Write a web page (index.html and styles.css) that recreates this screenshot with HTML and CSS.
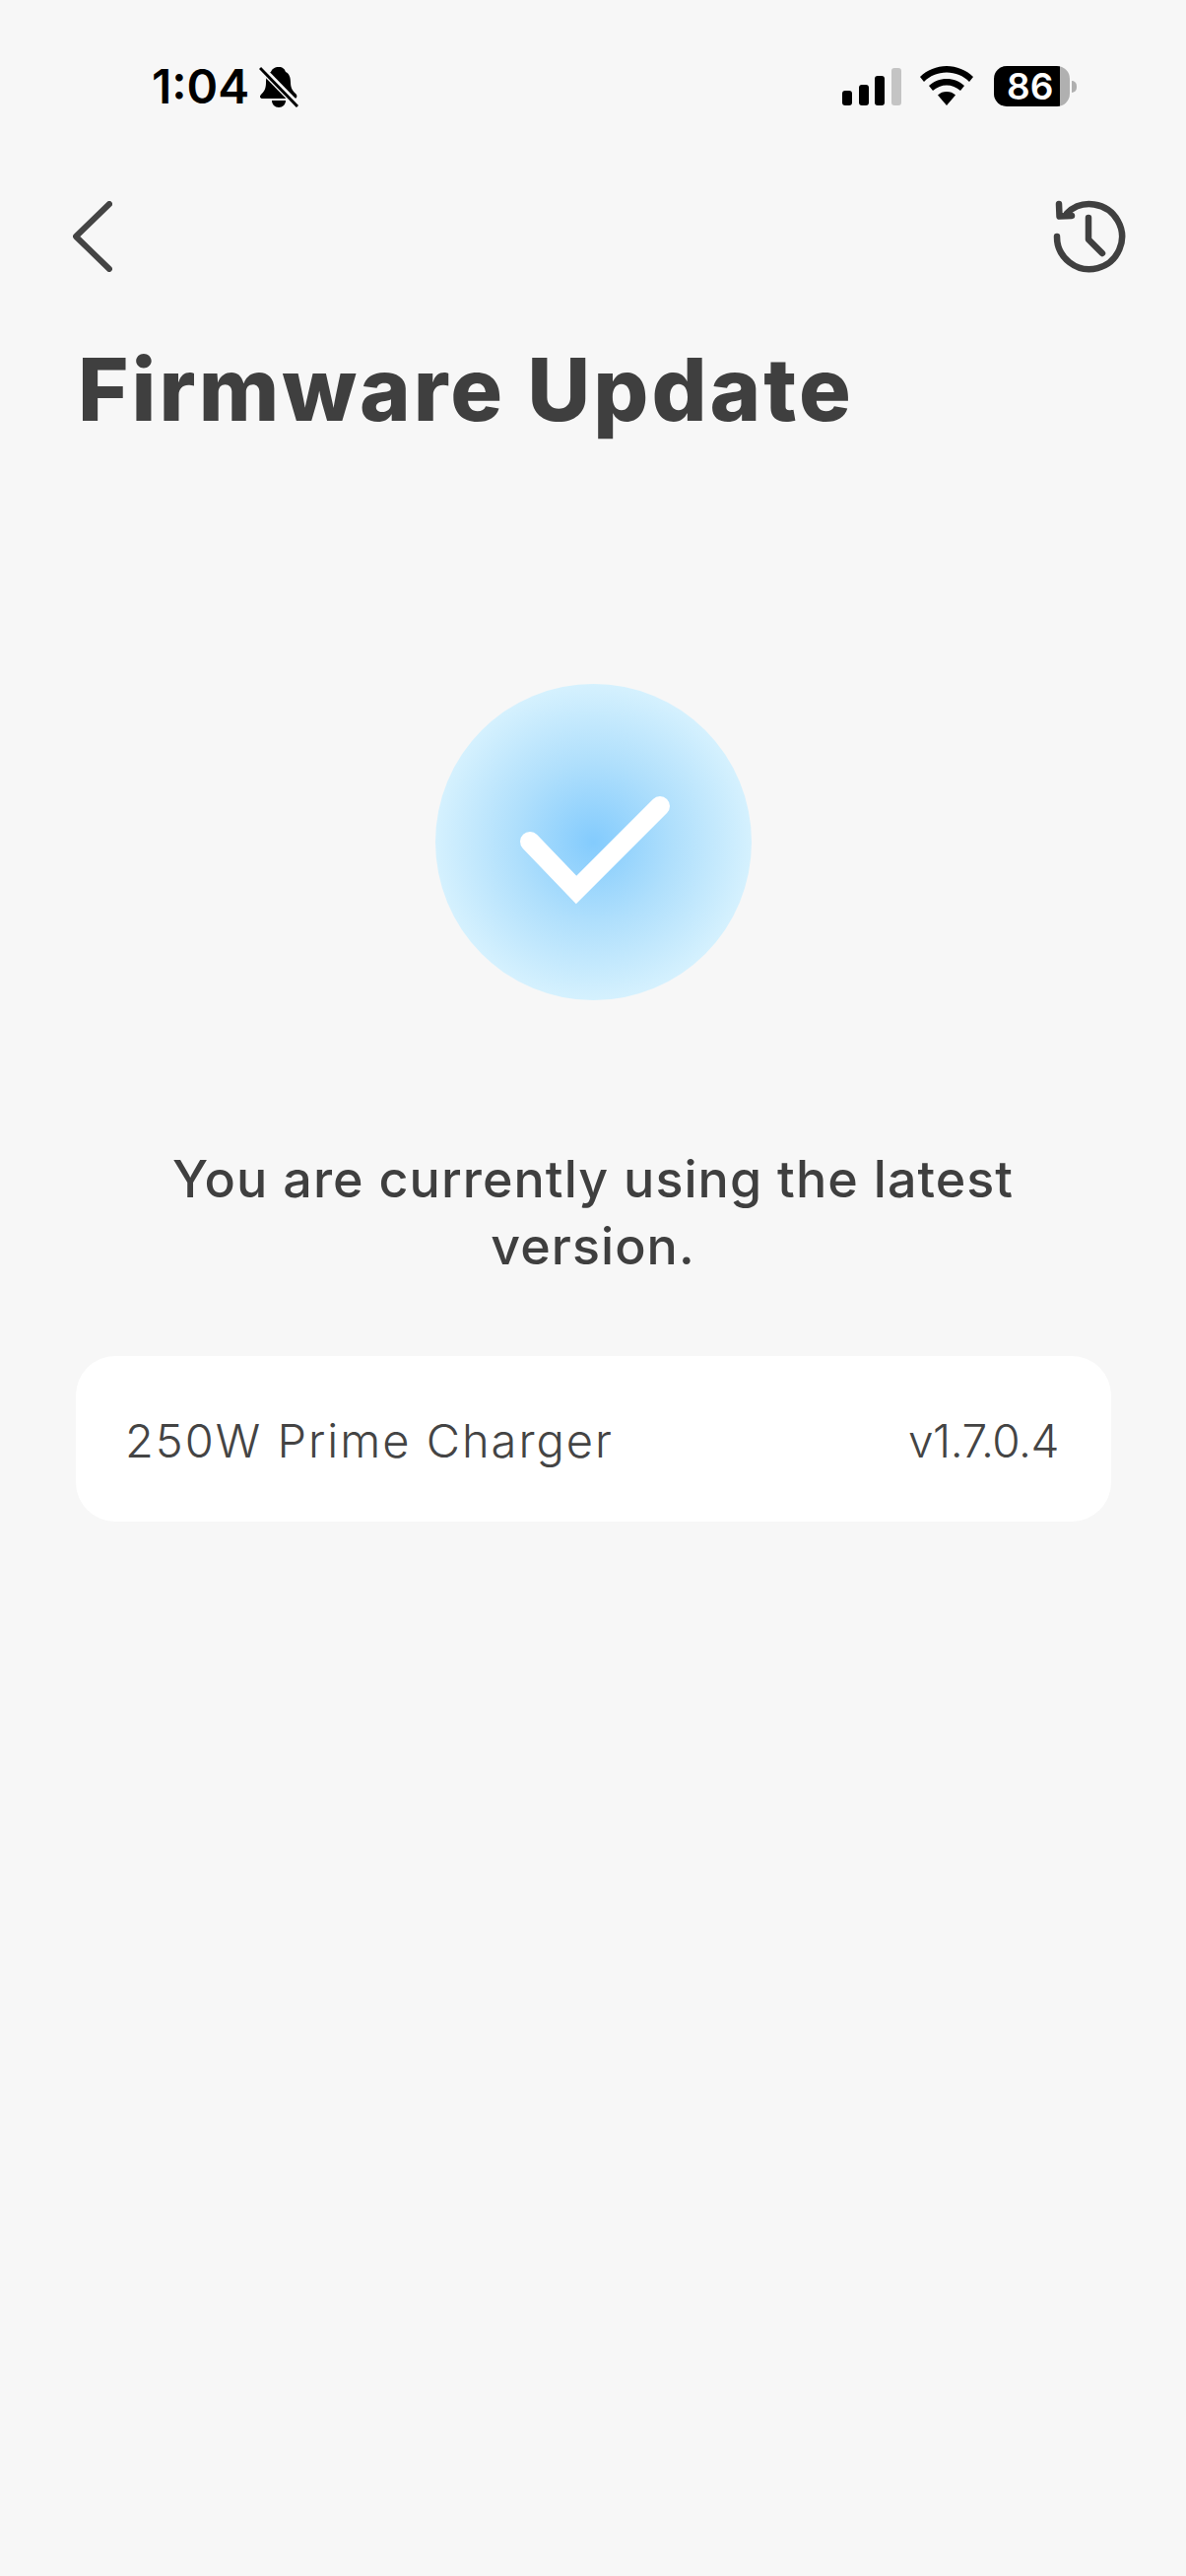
FILE: index.html
```html
<!DOCTYPE html>
<html lang="en">
<head>
<meta charset="utf-8">
<title>Firmware Update</title>
<link rel="stylesheet" href="styles.css">
</head>
<body>
<main class="screen">
  <header class="status">
    <div class="status-left">
      <span class="clock">1:04</span>
      <svg class="bell" width="40" height="42" viewBox="0 0 40 42">
        <path d="M20 1c4 0 6 2 7 5 4 2 5 6 5 11 0 6 3 9 6 12 1 2 0 4-2 4H4c-3 0-4-2-2-4 3-3 5-6 5-12 0-5 1-9 5-11 1-3 4-5 8-5z" fill="#000"/>
        <path d="M13 35h14c0 4-3 7-7 7s-7-3-7-7z" fill="#000"/>
        <path d="M0 0 40 41" stroke="#f7f7f7" stroke-width="7"/>
        <path d="M1 2 39 41" stroke="#000" stroke-width="3"/>
      </svg>
    </div>
    <div class="status-right">
      <svg class="signal" width="60" height="38" viewBox="0 0 60 38">
        <rect x="0" y="23" width="10" height="15" rx="3" fill="#000"/>
        <rect x="17" y="17" width="10" height="21" rx="3" fill="#000"/>
        <rect x="33" y="8" width="10" height="30" rx="3" fill="#000"/>
        <rect x="50" y="0" width="10" height="38" rx="3" fill="#c4c4c4"/>
      </svg>
      <svg class="wifi" width="54" height="40" viewBox="0 0 54 40">
        <path d="M27 0c10 0 20 4 27 11l-4 5C44 10 36 6.500 27 6.500S10 10 4 16L0 11C7 4 17 0 27 0z" fill="#000"/>
        <path d="M27 13c7 0 13 2.500 18 7l-4 5c-4-3.500-9-5.500-14-5.500S17 21.500 13 25l-4-5c5-4.500 11-7 18-7z" fill="#000"/>
        <path d="M27 26c3.500 0 6.500 1 9 3.500L27 40l-9-10.500C20.500 27 23.500 26 27 26z" fill="#000"/>
      </svg>
      <div class="battery">
        <div class="battery-body"><span class="battery-level">86</span></div>
        <span class="battery-nub"></span>
      </div>
    </div>
  </header>

  <nav class="topbar">
    <svg class="icon-back" width="40" height="72" viewBox="0 0 40 72">
      <path d="M37 3 3 36l34 33" fill="none" stroke="#444" stroke-width="6" stroke-linecap="round" stroke-linejoin="round"/>
    </svg>
    <svg class="icon-history" width="76" height="76" viewBox="0 0 76 76">
      <path d="M5 37a33 33 0 1 0 10-23.500" fill="none" stroke="#404040" stroke-width="6.500" stroke-linecap="round"/>
      <path d="M7 4 7.500 16.500 20 16" fill="none" stroke="#404040" stroke-width="6.500" stroke-linecap="round" stroke-linejoin="round"/>
      <path d="M37 18v22l14 14" fill="none" stroke="#404040" stroke-width="6.500" stroke-linecap="round" stroke-linejoin="round"/>
    </svg>
  </nav>

  <h1 class="title">Firmware Update</h1>

  <div class="badge">
    <svg class="check" width="321" height="321" viewBox="0 0 321 321">
      <path d="M96 160 143 209 228 124" fill="none" stroke="#fff" stroke-width="20" stroke-linecap="round" stroke-miterlimit="10"/>
    </svg>
  </div>

  <p class="message">You are currently using the latest version.</p>

  <section class="card">
    <span class="device">250W Prime Charger</span>
    <span class="version">v1.7.0.4</span>
  </section>
</main>
</body>
</html>
```

FILE: styles.css
```css
* {
  box-sizing: border-box;
}

html,
body {
  margin: 0;
  padding: 0;
}

body {
  background: #f7f7f7;
  color: #3f3f3f;
  font-family: Inter, "Liberation Sans", sans-serif;
}

.screen {
  min-height: 2614px;
  display: flex;
  flex-direction: column;
}

.status {
  height: 175px;
  padding: 67px 111px 0 154px;
  display: flex;
  justify-content: space-between;
  align-items: flex-start;
}

.status-left {
  display: flex;
  align-items: center;
  gap: 10px;
  height: 42px;
}

.clock {
  font-size: 48px;
  font-weight: 600;
  line-height: 42px;
  color: #000;
}

.status-right {
  display: flex;
  align-items: flex-end;
  gap: 21px;
  height: 41px;
}

.signal {
  margin-bottom: 1px;
  margin-right: -2px;
}

.wifi {
  margin-bottom: 1px;
}

.battery {
  display: flex;
  align-items: center;
  gap: 2px;
}

.battery-body {
  width: 77px;
  height: 41px;
  border-radius: 13px;
  background: linear-gradient(90deg, #000 87%, #b0b0b0 87%);
  display: flex;
  align-items: center;
  padding-left: 13px;
}

.battery-level {
  color: #fff;
  font-size: 37px;
  font-weight: 600;
  line-height: 41px;
}

.battery-nub {
  width: 5px;
  height: 12px;
  border-radius: 0 6px 6px 0;
  background: #b0b0b0;
}

.topbar {
  display: flex;
  justify-content: space-between;
  align-items: center;
  height: 76px;
  padding: 0 60px 0 74px;
  margin-top: 27px;
}

.icon-history {
  margin-top: 2px;
}

.title {
  margin: 67px 0 0;
  padding-left: 79px;
  font-size: 88px;
  font-weight: 800;
  letter-spacing: 3px;
  line-height: 100px;
  color: #3f3f3f;
}

.badge {
  align-self: center;
  width: 321px;
  height: 321px;
  margin-top: 249px;
  border-radius: 50%;
  background: radial-gradient(circle closest-side at center, #83cbfd 0%, #afdffc 50%, #d5f1fe 100%);
}

.check {
  display: block;
}

.message {
  margin: 148px auto 0;
  width: 900px;
  font-size: 52px;
  font-weight: 500;
  letter-spacing: 1.05px;
  line-height: 68px;
  text-align: center;
  color: #3f3f3f;
}

.card {
  margin: 77px 76px 0 77px;
  height: 168px;
  padding: 3px 53px 0 50px;
  border-radius: 40px;
  background: #fff;
  display: flex;
  align-items: center;
  justify-content: space-between;
  font-size: 47px;
  font-weight: 300;
  color: #444;
}

.device {
  letter-spacing: 2px;
}

.version {
  font-size: 46px;
  letter-spacing: -0.5px;
}
```
